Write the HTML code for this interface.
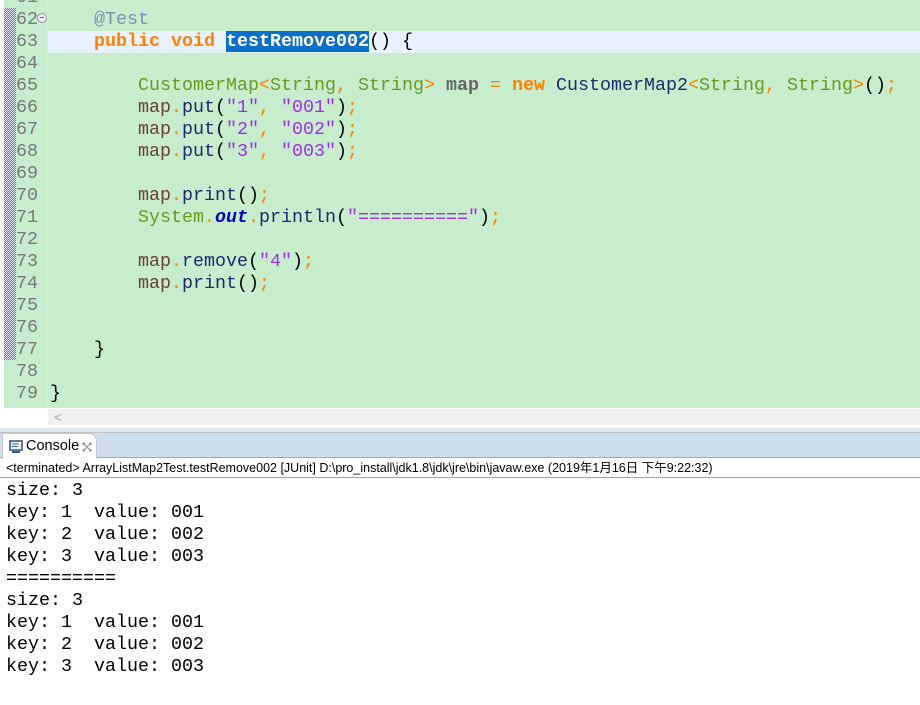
<!DOCTYPE html>
<html><head><meta charset="utf-8"><style>
*{margin:0;padding:0;box-sizing:border-box}
body{width:920px;height:705px;overflow:hidden;background:#fff;position:relative;font-family:"Liberation Mono",monospace}
.ed{position:absolute;left:0;top:0;width:920px;height:408px;background:#c7edcc}
.gut{position:absolute;left:0;top:0;width:48px;height:408px;background:#c7edcc}
.frame{position:absolute;left:0;top:0;width:4px;height:430px;background:#fff}
.hatch{position:absolute;left:4px;top:8px;width:12px;height:352px;background:repeating-conic-gradient(#3c78d8 0 25%,#e8f0fb 0 50%) 0 0/2px 2px}
.sep{position:absolute;left:47px;top:0;width:1px;height:408px;background:#d4f0d8}
.ln{position:absolute;left:16px;width:30px;font-size:18.33px;line-height:22px;color:#787878;text-align:left}
.cl{position:absolute;left:50px;font-size:18.33px;line-height:22px;white-space:pre;color:#000}
.cur{position:absolute;left:48px;top:31px;width:872px;height:22px;background:#e8f2fe}
.k{color:#ff8000;font-weight:bold}
.t{color:#6a9a1f}
.o{color:#ff8000}
.s{color:#9b30e8}
.v{color:#6a3e3e}
.m{color:#1e2a6e}
.a{color:#7f8fa8}
.sel{background:#0a6fc9;color:#fff;font-weight:bold}
.sb{position:absolute;left:48px;top:409px;width:872px;height:16px;background:#f0f0f0;color:#aaa;font:14px "Liberation Sans",sans-serif;padding-left:6px;line-height:16px}
.cbar{position:absolute;left:0;top:428px;width:920px;height:5px;background:#dfe6f3;border-bottom:1px solid #c0c0c0}
.tabbar{position:absolute;left:0;top:433px;width:920px;height:25px;background:#cfdeed;border-bottom:1px solid #a8a8a8}
.tab{position:absolute;left:2px;top:433px;width:95px;height:26px;background:#fff;border:1px solid #bcc8d8;border-bottom:none;border-radius:0 8px 0 0;font:14.5px "Liberation Sans",sans-serif;line-height:25px;padding-left:23px;color:#000;white-space:nowrap;overflow:hidden}
.hdr{position:absolute;left:0;top:459px;width:920px;height:19px;border-bottom:1px solid #a0a0a0;font:12.5px "Liberation Sans","Noto Sans CJK SC",sans-serif;line-height:18px;padding-left:6px;white-space:nowrap;background:#fff}
.con{position:absolute;left:6px;top:480px;font-size:18.33px;line-height:22px;white-space:pre;color:#000}
</style></head><body>
<div class="ed"></div>
<div class="cur"></div>
<div class="gut"></div>
<div class="frame"></div>
<div class="hatch"></div>
<div class="sep"></div>
<div class="ln" style="top:-13px">61<br>62<br>63<br>64<br>65<br>66<br>67<br>68<br>69<br>70<br>71<br>72<br>73<br>74<br>75<br>76<br>77<br>78<br>79</div>
<div style="position:absolute;left:37px;top:13px;width:10px;height:10px;border:1px solid #8a9aa8;border-radius:50%;background:#e8eef4"><div style="position:absolute;left:2px;top:3px;width:4px;height:1px;background:#667"></div></div>
<div class="cl" style="top:-13px">
    <span class="a">@Test</span>
    <span class="k">public</span> <span class="k">void</span> <span class="sel">testRemove002</span>() {

        <span class="t">CustomerMap</span><span class="o">&lt;</span><span class="t">String</span><span class="o">,</span> <span class="t">String</span><span class="o">&gt;</span> <b style="color:#666">map</b> <span class="o">=</span> <span class="k">new</span> <span class="m">CustomerMap2</span><span class="o">&lt;</span><span class="t">String</span><span class="o">,</span> <span class="t">String</span><span class="o">&gt;</span>()<span class="o">;</span>
        <span class="v">map</span><span class="o">.</span><span class="m">put</span>(<span class="s">"1"</span><span class="o">,</span> <span class="s">"001"</span>)<span class="o">;</span>
        <span class="v">map</span><span class="o">.</span><span class="m">put</span>(<span class="s">"2"</span><span class="o">,</span> <span class="s">"002"</span>)<span class="o">;</span>
        <span class="v">map</span><span class="o">.</span><span class="m">put</span>(<span class="s">"3"</span><span class="o">,</span> <span class="s">"003"</span>)<span class="o">;</span>

        <span class="v">map</span><span class="o">.</span><span class="m">print</span>()<span class="o">;</span>
        <span class="t">System</span><span class="o">.</span><b><i style="color:#0000c0">out</i></b><span class="o">.</span><span class="m">println</span>(<span class="s">"=========="</span>)<span class="o">;</span>

        <span class="v">map</span><span class="o">.</span><span class="m">remove</span>(<span class="s">"4"</span>)<span class="o">;</span>
        <span class="v">map</span><span class="o">.</span><span class="m">print</span>()<span class="o">;</span>


    }

}</div>
<div class="sb">&lt;</div>
<div class="cbar"></div>
<div class="tabbar"></div>
<div class="tab"><svg style="position:absolute;left:6px;top:6px" width="14" height="14" viewBox="0 0 14 14"><rect x="1" y="1" width="12" height="9" fill="#fff" stroke="#2f5a8a" stroke-width="1.6"/><line x1="3" y1="4" x2="10" y2="4" stroke="#2f5a8a"/><line x1="3" y1="6.5" x2="9" y2="6.5" stroke="#2f5a8a"/><rect x="3" y="11" width="8" height="2" fill="#2f5a8a"/></svg>Console<svg style="position:absolute;left:79px;top:8px" width="10" height="10" viewBox="0 0 10 10"><path d="M1 1 L9 9 M9 1 L1 9 M1 1 H3 M1 1 V3 M9 1 H7 M9 1 V3 M1 9 H3 M1 9 V7 M9 9 H7 M9 9 V7" stroke="#888" stroke-width="1" fill="none"/></svg></div>
<div class="hdr">&lt;terminated&gt; ArrayListMap2Test.testRemove002 [JUnit] D:\pro_install\jdk1.8\jdk\jre\bin\javaw.exe (2019年1月16日 下午9:22:32)</div>
<div class="con">size: 3
key: 1  value: 001
key: 2  value: 002
key: 3  value: 003
==========
size: 3
key: 1  value: 001
key: 2  value: 002
key: 3  value: 003</div>
</body></html>
